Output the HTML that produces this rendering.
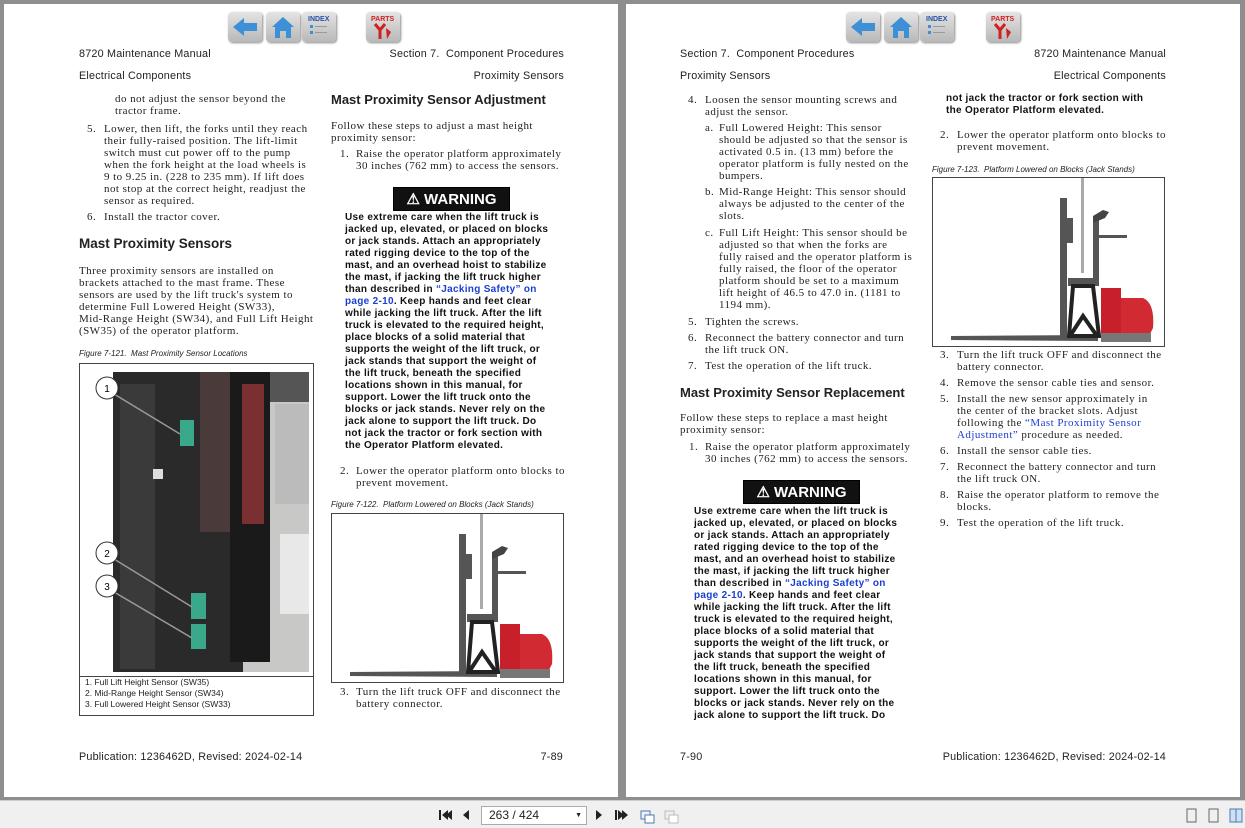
<!DOCTYPE html>
<html><head><meta charset="utf-8"><style>
*{margin:0;padding:0;box-sizing:border-box}
body{width:1245px;height:828px;background:#8e8e8e;position:relative;overflow:hidden;font-family:"Liberation Serif",serif;color:#222}
.pg{position:absolute;top:4px;width:614px;height:793px;background:#fff}
.a{position:absolute;white-space:nowrap}
.s{font-family:"Liberation Sans",sans-serif}
.t{font-size:11px;line-height:12px;letter-spacing:0.45px}
.h{font-family:"Liberation Sans",sans-serif;font-size:10.8px;letter-spacing:0.2px}
.hd{font-family:"Liberation Sans",sans-serif;font-weight:bold;font-size:13px}
.w{font-family:"Liberation Sans",sans-serif;font-weight:bold;font-size:10px;line-height:12px;letter-spacing:0.3px;color:#111}
.cap{font-family:"Liberation Sans",sans-serif;font-style:italic;font-size:8px}
.lk{color:#1a3fd0}
.wb{position:absolute;background:#111;color:#fff;font-family:"Liberation Sans",sans-serif;font-weight:bold;font-size:15px;text-align:center;line-height:23px;border:1px solid #000}
.box{position:absolute;border:1px solid #444;background:#fff}
.ic{position:absolute;width:34px;height:30px;border-radius:4px;background:linear-gradient(#e4e4e4,#b8b8b8);box-shadow:1px 1px 2px #888}
</style></head><body>

<div class="pg" style="left:4px"></div>
<div class="pg" style="left:626px"></div>

<div class="ic" style="left:228px;top:12px"><svg width="34" height="30"><path d="M5 15 L16 6 V11 H29 V19 H16 V24Z" fill="#3d8fd6"/></svg></div>
<div class="ic" style="left:266px;top:12px"><svg width="34" height="30"><path d="M6 15 L17 5 L28 15 H25 V26 H20 V19 H14 V26 H9 V15Z" fill="#3d8fd6"/></svg></div>
<div class="ic" style="left:302px;top:12px"><svg width="34" height="30"><text x="6" y="9" font-size="7" font-weight="bold" font-family="Liberation Sans" fill="#2a4fa8">INDEX</text><rect x="8" y="13" width="3" height="3" fill="#3d8fd6"/><rect x="8" y="19" width="3" height="3" fill="#3d8fd6"/><rect x="13" y="14" width="12" height="1" fill="#999"/><rect x="13" y="20" width="12" height="1" fill="#999"/></svg></div>
<div class="ic" style="left:366px;top:12px"><svg width="34" height="30"><text x="5" y="9" font-size="7" font-weight="bold" font-family="Liberation Sans" fill="#d02020">PARTS</text><path d="M9 12 L14 18 L19 12 M14 18 V27" stroke="#d02020" stroke-width="3" fill="none"/><path d="M20 16 L25 20 L21 27Z" fill="#d02020"/></svg></div>
<div class="ic" style="left:846px;top:12px"><svg width="34" height="30"><path d="M5 15 L16 6 V11 H29 V19 H16 V24Z" fill="#3d8fd6"/></svg></div>
<div class="ic" style="left:884px;top:12px"><svg width="34" height="30"><path d="M6 15 L17 5 L28 15 H25 V26 H20 V19 H14 V26 H9 V15Z" fill="#3d8fd6"/></svg></div>
<div class="ic" style="left:920px;top:12px"><svg width="34" height="30"><text x="6" y="9" font-size="7" font-weight="bold" font-family="Liberation Sans" fill="#2a4fa8">INDEX</text><rect x="8" y="13" width="3" height="3" fill="#3d8fd6"/><rect x="8" y="19" width="3" height="3" fill="#3d8fd6"/><rect x="13" y="14" width="12" height="1" fill="#999"/><rect x="13" y="20" width="12" height="1" fill="#999"/></svg></div>
<div class="ic" style="left:986px;top:12px"><svg width="34" height="30"><text x="5" y="9" font-size="7" font-weight="bold" font-family="Liberation Sans" fill="#d02020">PARTS</text><path d="M9 12 L14 18 L19 12 M14 18 V27" stroke="#d02020" stroke-width="3" fill="none"/><path d="M20 16 L25 20 L21 27Z" fill="#d02020"/></svg></div>

<!-- LEFT PAGE -->
<div class="a h" style="left:79px;top:48px">8720 Maintenance Manual</div>
<div class="a h" style="right:681px;top:48px">Section 7.&nbsp; Component Procedures</div>
<div class="a h" style="left:79px;top:70px">Electrical Components</div>
<div class="a h" style="right:681px;top:70px">Proximity Sensors</div>

<div class="a t" style="left:115px;top:93px">do not adjust the sensor beyond the<br>tractor frame.</div>
<div class="a t" style="left:87px;top:123px">5.</div>
<div class="a t" style="left:104px;top:123px">Lower, then lift, the forks until they reach<br>their fully-raised position. The lift-limit<br>switch must cut power off to the pump<br>when the fork height at the load wheels is<br>9 to 9.25 in. (228 to 235 mm). If lift does<br>not stop at the correct height, readjust the<br>sensor as required.</div>
<div class="a t" style="left:87px;top:211px">6.</div>
<div class="a t" style="left:104px;top:211px">Install the tractor cover.</div>
<div class="a hd" style="left:79px;top:236px;font-size:13.5px">Mast Proximity Sensors</div>
<div class="a t" style="left:79px;top:265px">Three proximity sensors are installed on<br>brackets attached to the mast frame. These<br>sensors are used by the lift truck's system to<br>determine Full Lowered Height (SW33),<br>Mid-Range Height (SW34), and Full Lift Height<br>(SW35) of the operator platform.</div>
<div class="a cap" style="left:79px;top:349px">Figure 7-121.&nbsp; Mast Proximity Sensor Locations</div>
<div class="box" style="left:79px;top:363px;width:235px;height:353px"></div>
<svg class="a" style="left:80px;top:364px" width="233" height="312">
<rect x="0" y="0" width="233" height="312" fill="#fff"/>
<rect x="33" y="8" width="196" height="300" fill="#c8c8c6"/>
<rect x="33" y="8" width="130" height="300" fill="#2a2a2a"/>
<rect x="40" y="20" width="35" height="285" fill="#3a3a3a"/>
<rect x="120" y="8" width="40" height="160" fill="#4a3a3a"/>
<rect x="150" y="8" width="40" height="290" fill="#1a1a1a"/>
<rect x="162" y="20" width="22" height="140" fill="#7a3030"/>
<rect x="190" y="8" width="39" height="30" fill="#555"/>
<rect x="195" y="40" width="34" height="100" fill="#bbb"/>
<rect x="200" y="170" width="29" height="80" fill="#e8e8e8"/>
<rect x="100" y="56" width="14" height="26" fill="#3aa88a"/>
<rect x="111" y="229" width="15" height="26" fill="#3aa88a"/>
<rect x="111" y="260" width="15" height="25" fill="#3aa88a"/>
<rect x="73" y="105" width="10" height="10" fill="#ddd"/>
<line x1="34" y1="30" x2="100" y2="70" stroke="#999" stroke-width="1.5"/>
<line x1="34" y1="195" x2="112" y2="243" stroke="#999" stroke-width="1.5"/>
<line x1="34" y1="228" x2="112" y2="274" stroke="#999" stroke-width="1.5"/>
<g font-family="Liberation Sans" font-size="10" text-anchor="middle">
<circle cx="27" cy="24" r="11" fill="#fff" stroke="#333"/><text x="27" y="28">1</text>
<circle cx="27" cy="189" r="11" fill="#fff" stroke="#333"/><text x="27" y="193">2</text>
<circle cx="27" cy="222" r="11" fill="#fff" stroke="#333"/><text x="27" y="226">3</text></g>
</svg>
<div class="a" style="left:79px;top:676px;width:235px;border-top:1px solid #444"></div>
<div class="a s" style="left:85px;top:677px;font-size:8.5px;line-height:11px">1. Full Lift Height Sensor (SW35)<br>2. Mid-Range Height Sensor (SW34)<br>3. Full Lowered Height Sensor (SW33)</div>

<div class="a hd" style="left:331px;top:92px">Mast Proximity Sensor Adjustment</div>
<div class="a t" style="left:331px;top:120px">Follow these steps to adjust a mast height<br>proximity sensor:</div>
<div class="a t" style="left:340px;top:148px">1.</div>
<div class="a t" style="left:356px;top:148px">Raise the operator platform approximately<br>30 inches (762 mm) to access the sensors.</div>
<div class="wb" style="left:393px;top:187px;width:117px;height:24px">&#9888; WARNING</div>
<div class="a w" style="left:345px;top:212px">Use extreme care when the lift truck is<br>jacked up, elevated, or placed on blocks<br>or jack stands. Attach an appropriately<br>rated rigging device to the top of the<br>mast, and an overhead hoist to stabilize<br>the mast, if jacking the lift truck higher<br>than described in <span class="lk">“Jacking Safety” on</span><br><span class="lk">page 2-10</span>. Keep hands and feet clear<br>while jacking the lift truck. After the lift<br>truck is elevated to the required height,<br>place blocks of a solid material that<br>supports the weight of the lift truck, or<br>jack stands that support the weight of<br>the lift truck, beneath the specified<br>locations shown in this manual, for<br>support. Lower the lift truck onto the<br>blocks or jack stands. Never rely on the<br>jack alone to support the lift truck. Do<br>not jack the tractor or fork section with<br>the Operator Platform elevated.</div>
<div class="a t" style="left:340px;top:465px">2.</div>
<div class="a t" style="left:356px;top:465px">Lower the operator platform onto blocks to<br>prevent movement.</div>
<div class="a cap" style="left:331px;top:500px">Figure 7-122.&nbsp; Platform Lowered on Blocks (Jack Stands)</div>
<div class="box" style="left:331px;top:513px;width:233px;height:170px"></div>
<svg class="a" style="left:332px;top:514px" width="231" height="168">
<rect x="148" y="0" width="3" height="95" fill="#aaa"/>
<path d="M18 158 L165 157 L165 163 L18 162Z" fill="#555"/>
<rect x="127" y="20" width="7" height="142" fill="#555"/>
<rect x="134" y="40" width="6" height="25" fill="#555"/>
<path d="M135 100 H160 V40 H166 V108 H135Z" fill="#555"/>
<rect x="166" y="57" width="28" height="3" fill="#555"/>
<path d="M160 45 L172 40 L176 34 L170 32 L160 38Z" fill="#444"/>
<path d="M140 108 L136 158 L166 158 L160 108Z" fill="none" stroke="#222" stroke-width="4"/>
<path d="M137 158 L150 138 L164 158" fill="none" stroke="#222" stroke-width="4"/>
<rect x="168" y="110" width="20" height="48" fill="#c8202a"/>
<path d="M188 120 H210 Q222 125 220 150 L216 158 H188Z" fill="#d22a32"/>
<rect x="168" y="155" width="50" height="9" fill="#777"/>
</svg>
<div class="a t" style="left:340px;top:686px">3.</div>
<div class="a t" style="left:356px;top:686px">Turn the lift truck OFF and disconnect the<br>battery connector.</div>

<div class="a h" style="left:79px;top:751px">Publication: 1236462D, Revised: 2024-02-14</div>
<div class="a h" style="right:682px;top:751px">7-89</div>

<!-- RIGHT PAGE -->
<div class="a h" style="left:680px;top:48px">Section 7.&nbsp; Component Procedures</div>
<div class="a h" style="right:79px;top:48px">8720 Maintenance Manual</div>
<div class="a h" style="left:680px;top:70px">Proximity Sensors</div>
<div class="a h" style="right:79px;top:70px">Electrical Components</div>

<div class="a t" style="left:688px;top:94px">4.</div>
<div class="a t" style="left:705px;top:94px">Loosen the sensor mounting screws and<br>adjust the sensor.</div>
<div class="a t" style="left:705px;top:122px">a.</div>
<div class="a t" style="left:719px;top:122px">Full Lowered Height: This sensor<br>should be adjusted so that the sensor is<br>activated 0.5 in. (13 mm) before the<br>operator platform is fully nested on the<br>bumpers.</div>
<div class="a t" style="left:705px;top:186px">b.</div>
<div class="a t" style="left:719px;top:186px">Mid-Range Height: This sensor should<br>always be adjusted to the center of the<br>slots.</div>
<div class="a t" style="left:705px;top:227px">c.</div>
<div class="a t" style="left:719px;top:227px">Full Lift Height: This sensor should be<br>adjusted so that when the forks are<br>fully raised and the operator platform is<br>fully raised, the floor of the operator<br>platform should be set to a maximum<br>lift height of 46.5 to 47.0 in. (1181 to<br>1194 mm).</div>
<div class="a t" style="left:688px;top:316px">5.</div>
<div class="a t" style="left:705px;top:316px">Tighten the screws.</div>
<div class="a t" style="left:688px;top:332px">6.</div>
<div class="a t" style="left:705px;top:332px">Reconnect the battery connector and turn<br>the lift truck ON.</div>
<div class="a t" style="left:688px;top:360px">7.</div>
<div class="a t" style="left:705px;top:360px">Test the operation of the lift truck.</div>
<div class="a hd" style="left:680px;top:385px">Mast Proximity Sensor Replacement</div>
<div class="a t" style="left:680px;top:412px">Follow these steps to replace a mast height<br>proximity sensor:</div>
<div class="a t" style="left:689px;top:441px">1.</div>
<div class="a t" style="left:705px;top:441px">Raise the operator platform approximately<br>30 inches (762 mm) to access the sensors.</div>
<div class="wb" style="left:743px;top:480px;width:117px;height:24px">&#9888; WARNING</div>
<div class="a w" style="left:694px;top:506px">Use extreme care when the lift truck is<br>jacked up, elevated, or placed on blocks<br>or jack stands. Attach an appropriately<br>rated rigging device to the top of the<br>mast, and an overhead hoist to stabilize<br>the mast, if jacking the lift truck higher<br>than described in <span class="lk">“Jacking Safety” on</span><br><span class="lk">page 2-10</span>. Keep hands and feet clear<br>while jacking the lift truck. After the lift<br>truck is elevated to the required height,<br>place blocks of a solid material that<br>supports the weight of the lift truck, or<br>jack stands that support the weight of<br>the lift truck, beneath the specified<br>locations shown in this manual, for<br>support. Lower the lift truck onto the<br>blocks or jack stands. Never rely on the<br>jack alone to support the lift truck. Do</div>

<div class="a w" style="left:946px;top:93px">not jack the tractor or fork section with<br>the Operator Platform elevated.</div>
<div class="a t" style="left:940px;top:129px">2.</div>
<div class="a t" style="left:957px;top:129px">Lower the operator platform onto blocks to<br>prevent movement.</div>
<div class="a cap" style="left:932px;top:165px">Figure 7-123.&nbsp; Platform Lowered on Blocks (Jack Stands)</div>
<div class="box" style="left:932px;top:177px;width:233px;height:170px"></div>
<svg class="a" style="left:933px;top:178px" width="231" height="168">
<rect x="148" y="0" width="3" height="95" fill="#aaa"/>
<path d="M18 158 L165 157 L165 163 L18 162Z" fill="#555"/>
<rect x="127" y="20" width="7" height="142" fill="#555"/>
<rect x="134" y="40" width="6" height="25" fill="#555"/>
<path d="M135 100 H160 V40 H166 V108 H135Z" fill="#555"/>
<rect x="166" y="57" width="28" height="3" fill="#555"/>
<path d="M160 45 L172 40 L176 34 L170 32 L160 38Z" fill="#444"/>
<path d="M140 108 L136 158 L166 158 L160 108Z" fill="none" stroke="#222" stroke-width="4"/>
<path d="M137 158 L150 138 L164 158" fill="none" stroke="#222" stroke-width="4"/>
<rect x="168" y="110" width="20" height="48" fill="#c8202a"/>
<path d="M188 120 H210 Q222 125 220 150 L216 158 H188Z" fill="#d22a32"/>
<rect x="168" y="155" width="50" height="9" fill="#777"/>
</svg>
<div class="a t" style="left:940px;top:349px">3.</div>
<div class="a t" style="left:957px;top:349px">Turn the lift truck OFF and disconnect the<br>battery connector.</div>
<div class="a t" style="left:940px;top:377px">4.</div>
<div class="a t" style="left:957px;top:377px">Remove the sensor cable ties and sensor.</div>
<div class="a t" style="left:940px;top:393px">5.</div>
<div class="a t" style="left:957px;top:393px">Install the new sensor approximately in<br>the center of the bracket slots. Adjust<br>following the <span class="lk">“Mast Proximity Sensor<br>Adjustment”</span> procedure as needed.</div>
<div class="a t" style="left:940px;top:445px">6.</div>
<div class="a t" style="left:957px;top:445px">Install the sensor cable ties.</div>
<div class="a t" style="left:940px;top:461px">7.</div>
<div class="a t" style="left:957px;top:461px">Reconnect the battery connector and turn<br>the lift truck ON.</div>
<div class="a t" style="left:940px;top:489px">8.</div>
<div class="a t" style="left:957px;top:489px">Raise the operator platform to remove the<br>blocks.</div>
<div class="a t" style="left:940px;top:517px">9.</div>
<div class="a t" style="left:957px;top:517px">Test the operation of the lift truck.</div>

<div class="a h" style="left:680px;top:751px">7-90</div>
<div class="a h" style="right:79px;top:751px">Publication: 1236462D, Revised: 2024-02-14</div>

<div class="a" style="left:0;top:800px;width:1245px;height:28px;background:#f0f0f0;border-top:1px solid #ccc"></div>
<svg class="a" style="left:436px;top:806px" width="250" height="20">
<rect x="3" y="4" width="2" height="10" fill="#222"/><path d="M12 4 L6 9 L12 14Z M16 4 L10 9 L16 14Z" fill="#222"/>
<path d="M33 4 L27 9 L33 14Z" fill="#222"/>
<path d="M160 4 L166 9 L160 14Z" fill="#222"/>
<path d="M182 4 L188 9 L182 14Z M186 4 L192 9 L186 14Z" fill="#222"/><rect x="179" y="4" width="2" height="10" fill="#222"/>
<rect x="205" y="5" width="9" height="8" fill="none" stroke="#4a7ab0"/><rect x="209" y="9" width="9" height="8" fill="#fff" stroke="#4a7ab0"/>
<rect x="229" y="5" width="9" height="8" fill="none" stroke="#bbb"/><rect x="233" y="9" width="9" height="8" fill="#fff" stroke="#bbb"/>
</svg>
<div class="a s" style="left:481px;top:806px;width:106px;height:19px;background:#fff;border:1px solid #aaa;font-size:12px;line-height:17px;padding-left:7px">263 / 424<span style="position:absolute;right:4px;font-size:7px">&#9660;</span></div>
<svg class="a" style="left:1184px;top:806px" width="60" height="20">
<rect x="3" y="3" width="9" height="13" fill="none" stroke="#666"/><rect x="25" y="3" width="9" height="13" fill="none" stroke="#666"/>
<rect x="46" y="3" width="6" height="13" fill="#cfe0f5" stroke="#4a7ab0"/><rect x="52" y="3" width="6" height="13" fill="#cfe0f5" stroke="#4a7ab0"/>
</svg>
</body></html>
